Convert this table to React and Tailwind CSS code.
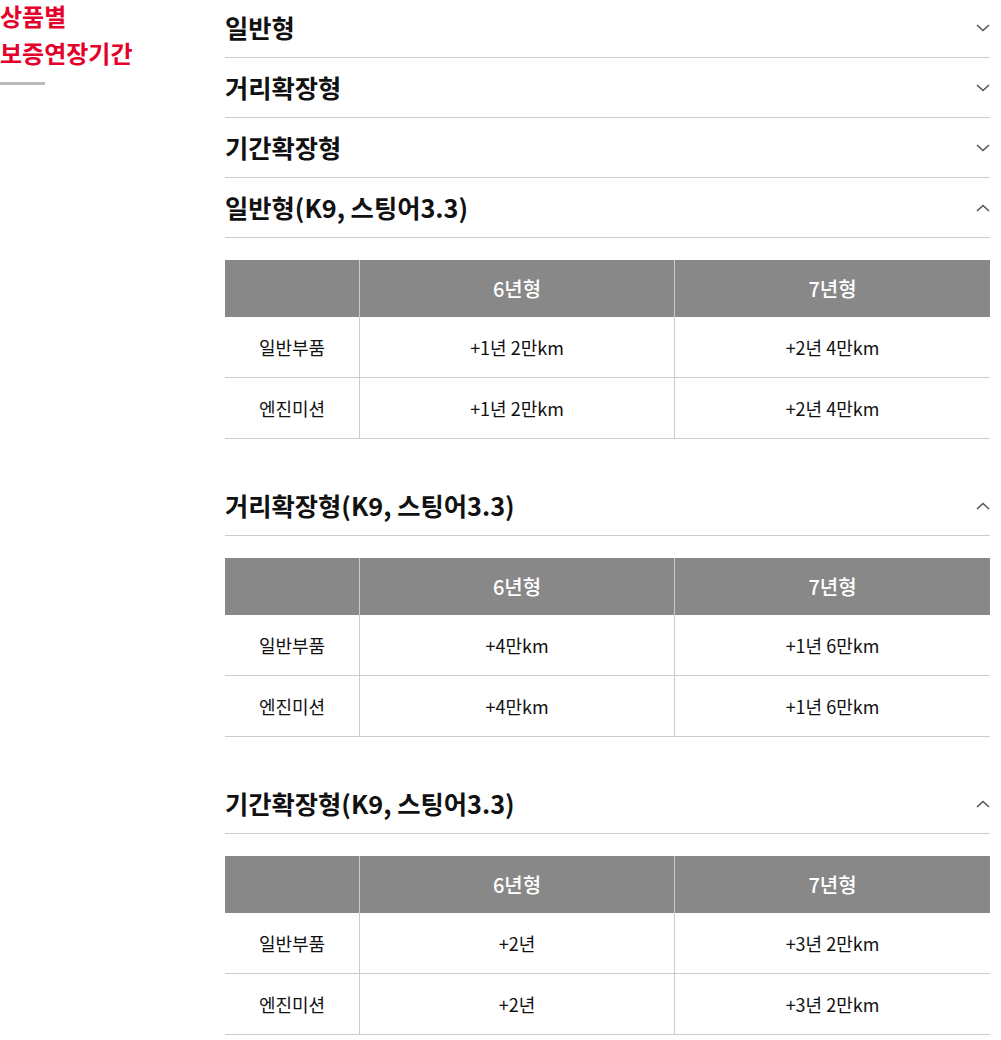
import React from "react";

const FONT = { fontFamily: '"Noto Sans CJK KR", "Noto Sans", sans-serif' };

function Chevron({ up }) {
  return (
    <svg width="14" height="8" viewBox="0 0 14 8">
      <polyline
        points={up ? "1,7 7,1.5 13,7" : "1,1 7,6.5 13,1"}
        fill="none"
        stroke="#555"
        strokeWidth="1.6"
      />
    </svg>
  );
}

function Header({ title, up }) {
  return (
    <div className="flex h-[60px] items-center justify-between border-b border-[#cccccc]">
      <span className="text-[25.3px] font-bold text-[#111]">{title}</span>
      <Chevron up={up} />
    </div>
  );
}

function Table({ rows }) {
  return (
    <div className="mt-[22px]">
      <div className="grid h-[57px] grid-cols-[135px_315px_315px] bg-[#888888] text-[20px] font-medium text-white">
        <div className="border-r border-[#cccccc]" />
        <div className="flex items-center justify-center border-r border-[#cccccc]">6년형</div>
        <div className="flex items-center justify-center">7년형</div>
      </div>
      {rows.map((r) => (
        <div key={r[0]} className="grid h-[61px] grid-cols-[135px_315px_315px] border-b border-[#cccccc] text-[18px] text-[#111]">
          <div className="flex items-center justify-center border-r border-[#cccccc]">{r[0]}</div>
          <div className="flex items-center justify-center border-r border-[#cccccc]">{r[1]}</div>
          <div className="flex items-center justify-center">{r[2]}</div>
        </div>
      ))}
    </div>
  );
}

export default function App() {
  const sections = [
    {
      title: "일반형(K9, 스팅어3.3)",
      rows: [
        ["일반부품", "+1년 2만km", "+2년 4만km"],
        ["엔진미션", "+1년 2만km", "+2년 4만km"],
      ],
    },
    {
      title: "거리확장형(K9, 스팅어3.3)",
      rows: [
        ["일반부품", "+4만km", "+1년 6만km"],
        ["엔진미션", "+4만km", "+1년 6만km"],
      ],
    },
    {
      title: "기간확장형(K9, 스팅어3.3)",
      rows: [
        ["일반부품", "+2년", "+3년 2만km"],
        ["엔진미션", "+2년", "+3년 2만km"],
      ],
    },
  ];
  return (
    <div className="flex w-[1001px] bg-white" style={FONT}>
      <aside className="w-[225px] shrink-0">
        <h2 className="-mt-[3px] text-[24px] font-bold leading-[37px] text-[#e4002b]">
          상품별
          <br />
          보증연장기간
        </h2>
        <div className="mt-[11px] h-[3px] w-[45px] bg-[#bbbbbb]" />
      </aside>
      <main className="-mt-[2px] w-[765px]">
        <Header title="일반형" />
        <Header title="거리확장형" />
        <Header title="기간확장형" />
        {sections.map((s, i) => (
          <div key={s.title} className={i === 0 ? "" : "mt-[37px]"}>
            <Header title={s.title} up />
            <Table rows={s.rows} />
          </div>
        ))}
      </main>
    </div>
  );
}
